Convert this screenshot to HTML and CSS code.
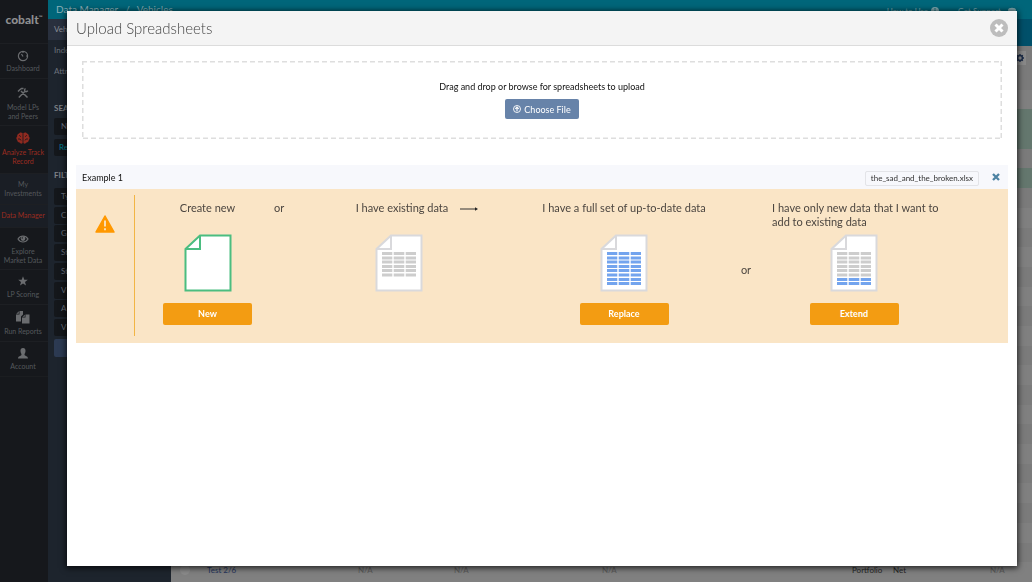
FILE: index.html
```html
<!DOCTYPE html>
<html lang="en">
<head>
<meta charset="utf-8">
<title>Upload Spreadsheets</title>
<link rel="stylesheet" href="styles.css">
</head>
<body>
<svg class="defs" aria-hidden="true">
  <defs>
    <g id="sheet">
      <path d="M16 1.5H46.500V56.500H1.500V15Z" fill="#fff"/>
      <path d="M16 1.500H46.500V56.500H1.500V15ZM16 1.500V15H1.500" fill="none" stroke="currentColor" stroke-width="2"/>
    </g>
    <path id="line" d="M7 0H17.300M18.700 0H29.300M30.700 0H41" stroke-width="2.800"/>
  </defs>
</svg>
<div class="app">
  <nav class="rail">
    <div class="brand">cobalt<sup>™</sup></div>
    <a class="rail-item dashboard" href="#">
      <svg width="12" height="12" viewBox="0 0 12 12" fill="none" stroke="currentColor" stroke-width="1.200"><circle cx="6" cy="6" r="4.600"/><path d="M6 6.500L4.500 4M6 2v1M9 6h1"/></svg>
      Dashboard</a>
    <a class="rail-item model" href="#">
      <svg width="12" height="12" viewBox="0 0 12 12" fill="none" stroke="currentColor" stroke-width="1.500"><path d="M1.800 10.500L7.500 4.800M10.500 10.500L4 4M1 4.500L2.500 3 4.500 1.500H6.500M8.500 1.500A2 2 0 0 0 8 4.300 2 2 0 0 0 10.800 3.700"/></svg>
      Model LPs<br>and Peers</a>
    <a class="rail-item analyze" href="#">
      <svg width="14" height="12" viewBox="0 0 14 12"><path d="M6.600 1C5 0 3.500 .5 3 1.600 1.500 2 1 3.400 1.200 4.500 0 5.500 .2 7.200 1.200 8c0 1.600 1 2.500 2.300 2.500C4.300 11.800 5.700 12 6.600 11ZM7.400 1C9 0 10.500 .5 11 1.600c1.500 .4 2 1.800 1.800 2.900C14 5.500 13.800 7.200 12.800 8c0 1.600-1 2.500-2.300 2.500C9.700 11.800 8.300 12 7.400 11Z" fill="currentColor"/><path d="M3 3.500c1 0 1.500.5 1.500 1.500M2 7h2l1 1.500M11 3.500c-1 0-1.500.5-1.500 1.500M12 7h-2L9 8.500" fill="none" stroke="#16181c" stroke-width=".8"/></svg>
      Analyze Track<br>Record</a>
    <a class="rail-item sub" href="#">My<br>Investments</a>
    <a class="rail-item sub current" href="#">Data Manager</a>
    <a class="rail-item explore" href="#">
      <svg width="12" height="10" viewBox="0 0 12 10"><path d="M1 5C3.500 1 8.500 1 11 5 8.500 9 3.500 9 1 5Z" fill="none" stroke="currentColor" stroke-width="1.200"/><circle cx="6" cy="4.600" r="2.300" fill="currentColor"/><circle cx="5.300" cy="3.900" r=".7" fill="#16181c"/></svg>
      Explore<br>Market Data</a>
    <a class="rail-item scoring" href="#">
      <svg width="10" height="10" viewBox="0 0 10 10"><path d="M5 .3L6.300 3.700 9.800 3.800 7 6 8 9.500 5 7.500 2 9.500 3 6 .2 3.800 3.700 3.700Z" fill="currentColor"/></svg>
      LP Scoring</a>
    <a class="rail-item reports" href="#">
      <svg width="14" height="13" viewBox="0 0 14 13" fill="currentColor"><path d="M3.500 0H7V3.500L5 5.500V10.500H0V3.500H3.500ZM2.800 .3V2.800H.3Z"/><path d="M9.500 3.500H13.500V12.500H6V6.500H9.500ZM8.800 3.800V5.800H6.500Z"/></svg>
      Run Reports</a>
    <a class="rail-item account" href="#">
      <svg width="10" height="11" viewBox="0 0 10 11"><path d="M5 0C7 0 7.700 1.300 7.500 3.300 7.300 5 6.500 5.800 6.500 7 7 8 10 8 10 10.500H0C0 8 3 8 3.500 7 3.500 5.800 2.700 5 2.500 3.300 2.300 1.300 3 0 5 0Z" fill="currentColor"/></svg>
      Account</a>
  </nav>
  <div class="workspace">
    <header class="topbar">
      <div class="crumbs"><strong>Data Manager</strong><span>/</span><span>Vehicles</span></div>
      <div class="help"><a href="#">How to Use <svg width="8" height="8" viewBox="0 0 8 8"><circle cx="4" cy="4" r="4" fill="currentColor"/><path d="M4 1.200V2.400M4 3.300V6.500" stroke="#00606f" stroke-width="1.200"/></svg></a>
      <a href="#">Get Support <svg class="chat" width="9" height="8" viewBox="0 0 9 8"><path d="M0 3C0 0 8 0 8 3S4 6 2.500 5.500L1 7V5Q0 4 0 3Z" fill="currentColor"/></svg></a></div>
    </header>
    <div class="columns">
      <aside class="filters">
        <a class="tab selected" href="#">Vehi</a>
        <a class="tab" href="#">Inde</a>
        <a class="tab" href="#">Attri</a>
        <h2 class="search-title">SEA</h2>
        <div class="chip">N</div>
        <div class="chip reset">Res</div>
        <h2 class="filter-title">FILT</h2>
        <div class="chips"><div class="chip">Ty</div><div class="chip">C</div><div class="chip">G</div><div class="chip">St</div><div class="chip">St</div><div class="chip">V</div><div class="chip">A</div><div class="chip">V</div></div>
        <div class="apply"></div>
      </aside>
      <main class="listing">
        <div class="band"></div>
        <div class="tools"><button class="gear" aria-label="Settings"><svg width="8" height="8" viewBox="0 0 8 8"><circle cx="4" cy="4" r="2.400" fill="none" stroke="#1c2c48" stroke-width="1.500"/><path d="M4 0V1.200M4 6.800V8M0 4H1.200M6.800 4H8M1.200 1.200L2 2M6 6L6.800 6.800M6.800 1.200L6 2M2 6L1.200 6.800" stroke="#1c2c48" stroke-width="1.300"/></svg></button></div>
        <div class="stripes"><i></i><i></i><i class="green"></i><i class="green"></i><i></i><i class="green"></i><i></i><i></i><i></i><i></i><i></i><i></i><i></i><i></i><i></i><i></i><i></i><i></i><i></i><i></i><i></i><i></i><i></i><i></i><i></i></div>
        <table class="row"><tr><td class="pick"><span class="dot"></span></td><td><a href="#">Test 2/6</a></td><td>N/A</td><td>N/A</td><td>N/A</td><td class="dark">Portfolio</td><td class="dark">Net</td><td>N/A</td></tr></table>
      </main>
    </div>
  </div>
</div>

<section class="modal" role="dialog" aria-labelledby="dialog-title">
  <header class="modal-head">
    <h1 id="dialog-title">Upload Spreadsheets</h1>
    <button class="close" aria-label="Close"><svg width="18" height="18" viewBox="0 0 18 18"><circle cx="9" cy="9" r="9" fill="#bdbdbd"/><path d="M5.500 5.500L12.500 12.500M12.500 5.500L5.500 12.500" stroke="#fff" stroke-width="3"/></svg></button>
  </header>
  <div class="modal-body">
    <div class="dropzone">
      <svg class="dashes" aria-hidden="true"><rect width="100%" height="100%" fill="none" stroke="#dedede" stroke-width="3" stroke-dasharray="5 3"/></svg>
      <p>Drag and drop or browse for spreadsheets to upload</p>
      <button class="choose"><svg width="8" height="8" viewBox="0 0 8 8" fill="none" stroke="currentColor"><circle cx="4" cy="4" r="3.500" stroke-width=".9"/><path d="M4 6.200V2.200M2.300 3.800L4 2.100 5.700 3.800" stroke-width="1.100"/></svg>Choose File</button>
    </div>
    <article class="upload">
      <header class="upload-head">
        <h2>Example 1</h2>
        <span class="filename">the_sad_and_the_broken.xlsx</span>
        <button class="remove" aria-label="Remove file"><svg width="8" height="8" viewBox="0 0 8 8"><path d="M1 1L7 7M7 1L1 7" stroke="#4d83a3" stroke-width="2.300"/></svg></button>
      </header>
      <div class="upload-body">
        <div class="alert"><svg width="20" height="18" viewBox="0 0 20 18"><path d="M10 1L19 17H1Z" fill="#ff9800" stroke="#ff9800" stroke-width="1.500" stroke-linejoin="round"/><path d="M10 5.500V11.500M10 13.300V15.200" stroke="#fbe5c6" stroke-width="1.800"/></svg></div>
        <div class="options">
          <div class="option"><p>Create new</p><svg class="doc new" width="48" height="58" viewBox="0 0 48 58"><use href="#sheet"/></svg><button class="action">New</button></div>
          <div class="joiner first">or</div>
          <div class="option existing"><p>I have existing data</p><svg class="doc" width="48" height="58" viewBox="0 0 48 58"><use href="#sheet"/><g stroke="#cdcdcd"><use href="#line" y="19.500"/><use href="#line" y="24"/><use href="#line" y="28"/><use href="#line" y="32.500"/><use href="#line" y="36.500"/><use href="#line" y="41"/></g></svg></div>
          <div class="joiner arrow"><svg width="18" height="6" viewBox="0 0 18 6"><path d="M0 3H16" stroke="#333" stroke-width="1"/><path d="M15 1.200L18 3 15 4.800Z" fill="#222"/></svg></div>
          <div class="option"><p>I have a full set of up-to-date data</p><svg class="doc" width="48" height="58" viewBox="0 0 48 58"><use href="#sheet"/><g stroke="#73a4ee"><use href="#line" y="19.500"/><use href="#line" y="24"/><use href="#line" y="28"/><use href="#line" y="32.500"/><use href="#line" y="36.500"/><use href="#line" y="41"/><use href="#line" y="45.500"/><use href="#line" y="49.500"/></g></svg><button class="action">Replace</button></div>
          <div class="joiner middle">or</div>
          <div class="option extend"><p>I have only new data that I want to add to existing data</p><svg class="doc" width="48" height="58" viewBox="0 0 48 58"><use href="#sheet"/><g stroke="#cdcdcd"><use href="#line" y="19.500"/><use href="#line" y="24"/><use href="#line" y="28"/><use href="#line" y="32.500"/><use href="#line" y="36.500"/><use href="#line" y="41"/></g><g stroke="#73a4ee"><use href="#line" y="45.500"/><use href="#line" y="49.500"/></g></svg><button class="action">Extend</button></div>
        </div>
      </div>
    </article>
  </div>
</section>
</body>
</html>
```
FILE: styles.css
```css
* { box-sizing: border-box; }
body, h1, h2, p { margin: 0; }
body { font-family: Lato, sans-serif; font-size: 10px; overflow: hidden; background: #808080; }
button { font-family: inherit; border: 0; padding: 0; cursor: pointer; }
a { color: inherit; text-decoration: none; }
svg { display: block; }
.defs { position: absolute; width: 0; height: 0; }

.app { display: flex; height: 100vh; }

/* Icon rail */
.rail { flex: 0 0 48px; background: #16181c; color: #55585c; }
.brand { height: 43px; padding-top: 12px; text-align: center; font-size: 12px; line-height: 16px; font-weight: 900; color: #8d8e90; }
.brand sup { font-size: 5px; vertical-align: 5px; line-height: 0; }
.rail-item { display: flex; flex-direction: column; align-items: center; text-align: center; font-size: 7px; line-height: 9px; padding: 6px 2px 0 0; border-top: 1px solid #1d1f23; white-space: nowrap; }
.rail-item svg { margin-bottom: 2px; color: #6a6c6f; }
.dashboard { height: 35px; }
.model { height: 47px; padding-top: 8px; }
.model svg { margin-bottom: 4px; }
.analyze { height: 48px; color: #9b2c20; }
.analyze svg { color: #8f2a20; margin-bottom: 4px; }
.sub { background: #1a1e25; height: 31px; }
.current { height: 23px; color: #9b2c20; }
.explore { height: 42px; }
.explore svg { margin-bottom: 3px; }
.scoring { height: 35px; }
.scoring svg { margin-bottom: 4px; }
.reports { height: 37px; }
.reports svg { margin-bottom: 3px; }
.account { height: 36px; border-bottom: 1px solid #1b1d20; }
.account svg { margin-bottom: 3px; }

.workspace { flex: 1; display: flex; flex-direction: column; min-width: 0; }
.topbar { display: flex; justify-content: space-between; height: 19px; background: #00667a; color: #7fa9b0; padding: 3px 15px 0 8px; }
.crumbs { display: flex; gap: 7px; font-size: 10px; line-height: 12px; }
.crumbs strong { font-weight: 400; color: #8ab0b8; }
.help { display: flex; gap: 19px; font-size: 8px; line-height: 13px; }
.help a { display: flex; gap: 3px; align-items: center; }
.help .chat { margin-left: 4px; }
.columns { flex: 1; display: flex; min-height: 0; }

/* Filter column */
.filters { flex: 0 0 123px; background: #1d242d; color: #6c727b; font-size: 8px; }
.tab { display: block; height: 21px; line-height: 21px; padding-left: 6px; }
.selected { background: #29303e; color: #8a8e96; }
.filters h2 { font-size: 8px; line-height: 10px; padding-left: 6px; color: #7d8187; }
.search-title { margin: 21px 0 5px; }
.filter-title { margin: 14px 0 8px; }
.chips { display: flex; flex-direction: column; justify-content: space-between; height: 148px; }
.chip { height: 17px; margin: 0 6px; padding-left: 7px; line-height: 17px; background: #14171b; border-radius: 2px; }
.reset { color: #007f91; padding-left: 5px; margin-top: 4px; }
.apply { height: 18px; margin: 3px 6px; background: #2c3a52; border-radius: 2px; }

/* Listing behind the dialog */
.listing { flex: 1; display: flex; flex-direction: column; background: #808080; }
.band { height: 27px; background: #00506a; }
.tools { height: 24px; display: flex; justify-content: flex-end; padding: 5px 6px; background: #7b7b7b; }
.gear { width: 12px; height: 14px; background: #898989; display: flex; align-items: center; justify-content: center; }
.stripes { flex: 1; display: flex; flex-direction: column; }
.stripes i { flex: 1; background: #808080; }
.stripes i:nth-child(odd) { background: #7b7b7b; }
.stripes i.green { background: #64776e; }
.row { height: 20px; border-spacing: 0; width: 100%; table-layout: fixed; background: #808080; color: #5a5a5a; font-size: 8px; line-height: 10px; }
.row td { padding: 3px 0 0; vertical-align: top; }
.row td:nth-child(1) { width: 36px; }
.row td:nth-child(2) { width: 151px; color: #25345c; }
.row td:nth-child(3) { width: 96px; }
.row td:nth-child(4) { width: 148px; }
.row td:nth-child(6) { width: 41px; }
.row td:nth-child(7) { width: 97px; }
.row td:nth-child(8) { width: 42px; }
.row .dark { color: #262626; }
.dot { display: block; width: 10px; height: 10px; margin-left: 9px; border-radius: 50%; background: #8a8a8a; }

/* Dialog */
.modal { position: fixed; inset: 11px 15px 16px 67px; background: #fff; box-shadow: 0 1px 6px 1px rgba(0, 0, 0, .75); overflow: auto; }
.modal-head { display: flex; align-items: center; justify-content: space-between; height: 35px; padding: 0 9px; background: #f4f4f4; border-bottom: 1px solid #dcdcdc; }
.modal-head h1 { font-size: 15px; line-height: 20px; font-weight: 300; color: #444; }
.close { background: none; border-radius: 50%; }
.modal-body { padding: 15px 9px; }
.dropzone { position: relative; height: 78px; margin: 0 6px 26px; padding-top: 19px; display: flex; flex-direction: column; align-items: center; color: #111; }
.dashes { position: absolute; inset: 0; width: 100%; height: 100%; }
.dropzone p { font-size: 9px; line-height: 14px; }
.choose { position: relative; display: flex; align-items: center; gap: 3px; height: 20px; margin-top: 5px; padding: 0 8px; border-radius: 2px; background: #6783a9; color: #fff; font-size: 9px; }

.upload-head { display: flex; align-items: center; height: 24px; padding: 0 5px 0 6px; background: #f7f8fc; color: #111; }
.upload-head h2 { font-size: 9px; font-weight: 400; }
.filename { margin: 3px 10px 0 auto; padding: 0 5px; line-height: 13px; border: 1px solid #e3e4e8; border-radius: 2px; font-size: 8px; color: #333; }
.remove { width: 14px; height: 14px; display: grid; place-items: center; background: none; }
.upload-body { display: flex; background: #fae5c6; }
.alert { flex: 0 0 59px; margin: 6px 0 7px; padding: 20px 0 0 19px; border-right: 1px solid #f2b544; }
.options { flex: 1; display: grid; grid-template-columns: 115fr 84fr 100fr 79fr 192fr 50fr 168fr; padding: 12px 70px 18px 15px; color: #4c4640; font-size: 11px; line-height: 14px; }
.option { display: flex; flex-direction: column; align-items: center; min-width: 0; }
.option p { min-height: 28px; white-space: nowrap; }
.existing p { padding-left: 6px; }
.extend p { white-space: normal; padding-left: 2px; margin-right: -4px; }
.doc { margin-top: 5px; color: #d9d9dc; }
.doc.new { color: #4bbd80; }
.action { width: 89px; height: 22px; margin-top: 11px; padding-bottom: 1px; border-radius: 2px; background: #f39c12; color: #fff; font-size: 9px; font-weight: 700; }
.joiner.first { padding-left: 9px; }
.joiner.arrow { padding: 5px 0 0 11px; }
.joiner.middle { padding: 62px 0 0 2px; text-align: center; }
```
